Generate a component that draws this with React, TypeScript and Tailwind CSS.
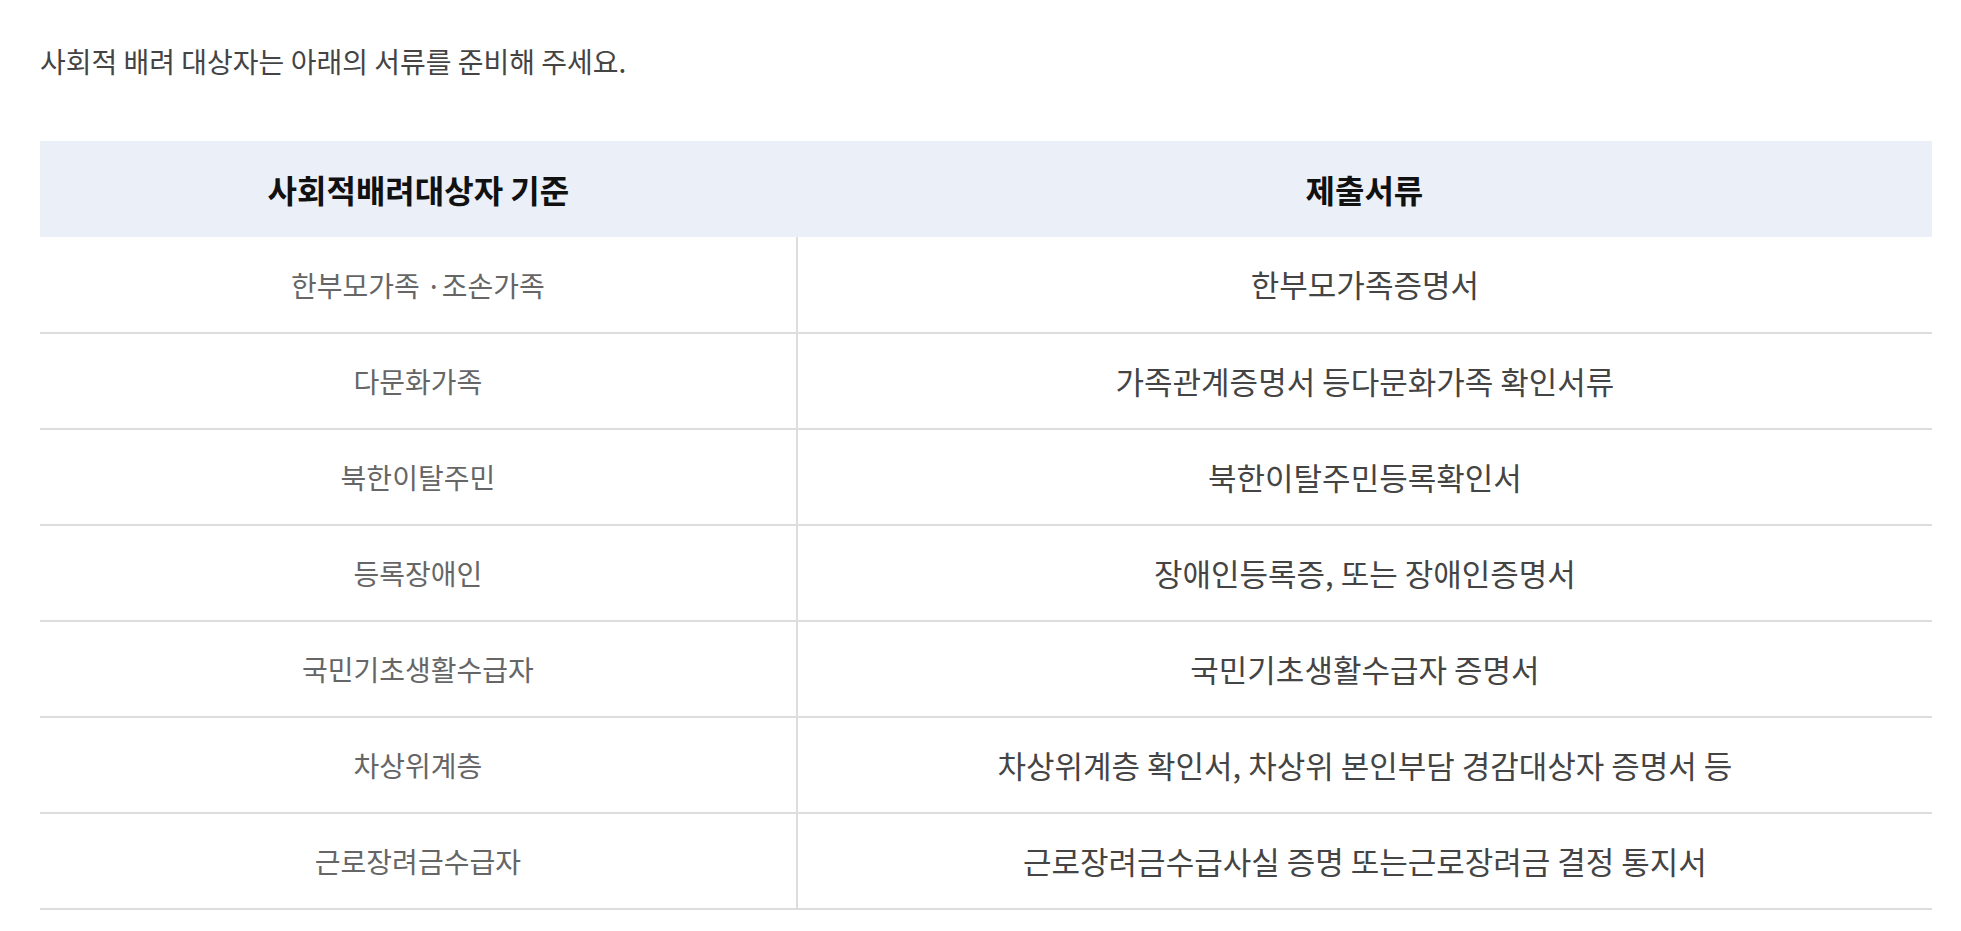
const rows = [
  ["한부모가족 ·조손가족", "한부모가족증명서"],
  ["다문화가족", "가족관계증명서 등다문화가족 확인서류"],
  ["북한이탈주민", "북한이탈주민등록확인서"],
  ["등록장애인", "장애인등록증, 또는 장애인증명서"],
  ["국민기초생활수급자", "국민기초생활수급자 증명서"],
  ["차상위계층", "차상위계층 확인서, 차상위 본인부담 경감대상자 증명서 등"],
  ["근로장려금수급자", "근로장려금수급사실 증명 또는근로장려금 결정 통지서"],
];

export default function App() {
  return (
    <div
      className="min-h-screen bg-white pl-[40px] pr-[29px] pt-[42px]"
      style={{ fontFamily: '"Noto Sans CJK KR", "Noto Sans", sans-serif' }}
    >
      <p className="text-[28px] leading-[38px] text-[#444]">
        사회적 배려 대상자는 아래의 서류를 준비해 주세요.
      </p>

      <table className="mt-[61px] w-full border-collapse table-fixed">
        <thead>
          <tr className="bg-[#ebeff7] h-[96px]">
            <th className="w-[40%] text-[32px] font-bold text-[#111]">
              사회적배려대상자 기준
            </th>
            <th className="text-[32px] font-bold text-[#111]">제출서류</th>
          </tr>
        </thead>
        <tbody>
          {rows.map(([who, doc]) => (
            <tr key={who} className="h-[96px] border-b-2 border-[#dddddd]">
              <td className="border-r-2 border-[#dddddd] text-center text-[28px] text-[#666]">
                {who}
              </td>
              <td className="text-center text-[31px] text-[#444]">{doc}</td>
            </tr>
          ))}
        </tbody>
      </table>
    </div>
  );
}
